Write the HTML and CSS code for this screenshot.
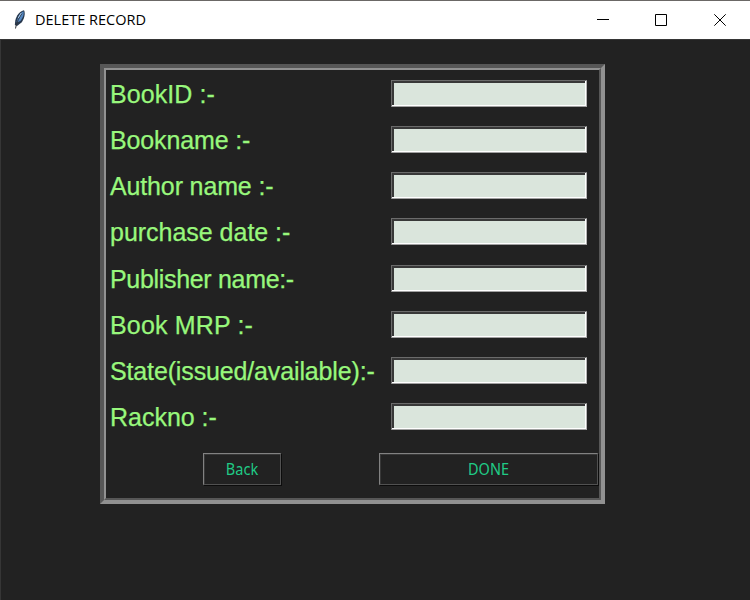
FILE: index.html
```html
<!DOCTYPE html>
<html lang="en">
<head>
<meta charset="utf-8">
<title>DELETE RECORD</title>
<link rel="stylesheet" href="styles.css">
</head>
<body>
<header class="titlebar">
  <svg class="feather" width="14" height="22" viewBox="0 0 14 22">
    <path d="M11 1.200C7 2 3.200 6.500 2.300 11.500L1.800 16L4 17L8.500 13.500C11 10.500 12.800 4.500 11 1.200Z" fill="#28394f"/>
    <path d="M10.300 2.300C7 4 4.500 8.500 3.500 13.500L7.300 12C10 8.500 11.500 5 10.300 2.300Z" fill="#5488c4"/>
    <path d="M9 4.500C6.500 8 4 12 2.500 19.500" fill="none" stroke="#30343a" stroke-width="1"/>
    <path d="M8.200 4L5.200 9" fill="none" stroke="#a8c8e8" stroke-width="1"/>
  </svg>
  <span class="title">DELETE RECORD</span>
  <div class="controls">
    <svg width="12" height="12" viewBox="0 0 12 12"><path d="M1 5.500H13"/></svg>
    <svg width="12" height="12" viewBox="0 0 12 12"><path d="M.5 .5H11.500V11.500H.5Z"/></svg>
    <svg width="12" height="12" viewBox="0 0 12 12"><path d="M.3 .3L11.700 11.700M11.700 .3L.3 11.700"/></svg>
  </div>
</header>
<main class="window">
  <div class="frame">
    <form class="form">
      <label class="row"><span class="label loose">BookID :-</span><input class="entry"></label>
      <label class="row"><span class="label snug">Bookname :-</span><input class="entry"></label>
      <label class="row"><span class="label snug">Author name :-</span><input class="entry"></label>
      <label class="row"><span class="label">purchase date :-</span><input class="entry"></label>
      <label class="row"><span class="label tight">Publisher name:-</span><input class="entry"></label>
      <label class="row"><span class="label wide">Book MRP :-</span><input class="entry"></label>
      <label class="row"><span class="label snug">State(issued/available):-</span><input class="entry"></label>
      <label class="row"><span class="label">Rackno :-</span><input class="entry"></label>
      <div class="buttons">
        <button type="button" class="button back"><span class="caption">Back</span></button>
        <button type="button" class="button done"><span class="caption">DONE</span></button>
      </div>
    </form>
  </div>
</main>
</body>
</html>
```

FILE: styles.css
```css
* { box-sizing: border-box; }
body {
  margin: 0;
  height: 600px;
  overflow: hidden;
  display: flex;
  flex-direction: column;
  background: #222;
}
.titlebar {
  height: 39px;
  flex: none;
  display: flex;
  align-items: center;
  padding-left: 13px;
  border-top: 1px solid #6b6866;
  background: #fff;
}
.feather { margin-top: -1px; }
.title {
  margin-left: 8px;
  font: 14.500px/20px "Open Sans", "Noto Sans", sans-serif;
  letter-spacing: 0;
  color: #000;
}
.controls {
  margin-left: auto;
  margin-right: 24px;
  display: flex;
  gap: 47px;
}
.controls svg { fill: none; stroke: #000; stroke-width: 1; overflow: visible; }
.window {
  flex: 1;
  border-top: 1px solid #363636;
  border-left: 1px solid #363636;
  padding: 24px 0 0 99px;
}
.frame {
  width: 505px;
  height: 440px;
  border: 4px solid;
  border-color: #575757 #919191 #919191 #575757;
}
.form {
  height: 100%;
  border: 2px solid;
  border-color: #919191 #575757 #575757 #919191;
}
.row {
  display: flex;
  align-items: center;
  height: 46.250px;
  padding-left: 4px;
}
.label {
  width: 281px;
  flex: none;
  padding-top: 1px;
  font: 25px/30px "Liberation Sans", Arial, sans-serif;
  letter-spacing: -0.020px;
  color: #98f77c;
  -webkit-text-stroke: 0.250px #98f77c;
  white-space: nowrap;
}
.loose { letter-spacing: 0.080px; }
.wide { letter-spacing: 0.170px; }
.snug { letter-spacing: -0.140px; }
.tight { letter-spacing: -0.320px; }
.entry {
  width: 196px;
  height: 27px;
  padding: 0;
  border: 1px solid;
  border-color: #6b6b6b #b5b5b5 #a0a0a0 #6b6b6b;
  border-radius: 0;
  outline: none;
  background: #dae5dc;
  box-shadow: inset -1px -1px #fff, inset 2px 2px #383838;
}
.buttons {
  display: flex;
  padding: 13px 0 0 97px;
}
.button {
  height: 32px;
  padding: 0;
  border: 1px solid;
  border-color: #828282 #515151 #515151 #828282;
  border-radius: 0;
  background: #222;
  box-shadow: 1px 1px #0c0c0c, inset 1px 1px #383838;
  font: 14.500px/20px "Noto Sans", sans-serif;
  letter-spacing: 0;
  color: #20cb86;
}
.caption {
  display: block;
  transform: scaleY(1.06);
}
.back { width: 78px; }
.done { width: 219px; margin-left: 98px; }
```
